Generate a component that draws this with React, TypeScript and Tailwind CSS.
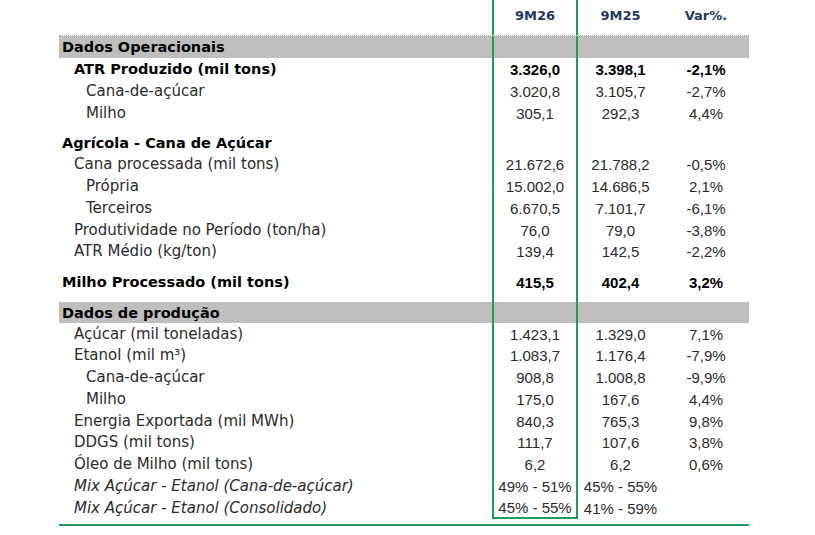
import React from "react";

type Row = {
  label: string;
  a?: string;
  b?: string;
  c?: string;
  indent?: 0 | 1 | 2;
  bold?: boolean;
  italic?: boolean;
  band?: boolean;
  h?: string;
  last?: boolean;
};

const rows: Row[] = [
  { label: "Dados Operacionais", band: true, h: "h-[22px]" },
  { label: "ATR Produzido (mil tons)", a: "3.326,0", b: "3.398,1", c: "-2,1%", indent: 1, bold: true, h: "h-[22px]" },
  { label: "Cana-de-açúcar", a: "3.020,8", b: "3.105,7", c: "-2,7%", indent: 2, h: "h-[22px]" },
  { label: "Milho", a: "305,1", b: "292,3", c: "4,4%", indent: 2, h: "h-[22px]" },
  { label: "", h: "h-[8px]" },
  { label: "Agrícola - Cana de Açúcar", bold: true, h: "h-[22px]" },
  { label: "Cana processada (mil tons)", a: "21.672,6", b: "21.788,2", c: "-0,5%", indent: 1 },
  { label: "Própria", a: "15.002,0", b: "14.686,5", c: "2,1%", indent: 2 },
  { label: "Terceiros", a: "6.670,5", b: "7.101,7", c: "-6,1%", indent: 2 },
  { label: "Produtividade no Período (ton/ha)", a: "76,0", b: "79,0", c: "-3,8%", indent: 1 },
  { label: "ATR Médio (kg/ton)", a: "139,4", b: "142,5", c: "-2,2%", indent: 1 },
  { label: "", h: "h-[8.5px]" },
  { label: "Milho Processado (mil tons)", a: "415,5", b: "402,4", c: "3,2%", bold: true, h: "h-[22px]" },
  { label: "", h: "h-[9px]" },
  { label: "Dados de produção", band: true, h: "h-[21px]" },
  { label: "Açúcar (mil toneladas)", a: "1.423,1", b: "1.329,0", c: "7,1%", indent: 1 },
  { label: "Etanol (mil m³)", a: "1.083,7", b: "1.176,4", c: "-7,9%", indent: 1 },
  { label: "Cana-de-açúcar", a: "908,8", b: "1.008,8", c: "-9,9%", indent: 2 },
  { label: "Milho", a: "175,0", b: "167,6", c: "4,4%", indent: 2 },
  { label: "Energia Exportada (mil MWh)", a: "840,3", b: "765,3", c: "9,8%", indent: 1 },
  { label: "DDGS (mil tons)", a: "111,7", b: "107,6", c: "3,8%", indent: 1 },
  { label: "Óleo de Milho (mil tons)", a: "6,2", b: "6,2", c: "0,6%", indent: 1 },
  { label: "Mix Açúcar - Etanol (Cana-de-açúcar)", a: "49% - 51%", b: "45% - 55%", indent: 1, italic: true },
  { label: "Mix Açúcar - Etanol (Consolidado)", a: "45% - 55%", b: "41% - 59%", indent: 1, italic: true, last: true },
];

const indents = ["pl-[3px]", "pl-[15px]", "pl-[27px]"];

function TableRow({ row }: { row: Row }) {
  const h = row.h ?? "h-[21.75px]";
  const strong = row.bold || row.band;
  const labelCls = strong ? "font-bold text-black text-[14.5px]" : "text-[#2b2b2b]";
  const numCls = `font-['Liberation_Sans',sans-serif] text-[15px] ${strong ? "font-bold text-black" : "text-[#2b2b2b]"}`;
  return (
    <div className={`flex items-center ${h} ${row.band ? "bg-[#bfbfbf]" : ""}`}>
      <div
        className={`w-[433px] h-full flex items-center whitespace-nowrap ${indents[row.indent ?? 0]} ${labelCls} ${row.italic ? "italic" : ""}`}
      >
        {row.label}
      </div>
      <div
        className={`w-[86px] h-full flex items-center justify-center whitespace-nowrap border-x-2 border-[#1f9d5c] ${row.last ? "border-b-2" : ""} ${numCls}`}
      >
        {row.a}
      </div>
      <div className={`w-[85px] h-full flex items-center justify-center whitespace-nowrap ${numCls}`}>
        {row.b}
      </div>
      <div className={`w-[86px] h-full flex items-center justify-center whitespace-nowrap ${numCls}`}>
        {row.c}
      </div>
    </div>
  );
}

export default function App() {
  return (
    <div className="w-[815px] h-[535px] bg-white overflow-hidden font-['DejaVu_Sans',sans-serif] text-[15px] leading-none">
      <div className="ml-[59px] w-[690px]">
        <div className="flex h-[36px] border-b border-dotted border-[#a6a6a6] font-bold text-[13px] text-[#1f3864]">
          <div className="w-[433px]" />
          <div className="w-[86px] flex justify-center pt-[9px] border-x-2 border-[#1f9d5c]">9M26</div>
          <div className="w-[85px] flex justify-center pt-[9px]">9M25</div>
          <div className="w-[86px] flex justify-center pt-[9px]">Var%.</div>
        </div>
        {rows.map((row, i) => (
          <TableRow key={i} row={row} />
        ))}
        <div className="mt-[5px] h-[2px] bg-[#1f9d5c]" />
      </div>
    </div>
  );
}
